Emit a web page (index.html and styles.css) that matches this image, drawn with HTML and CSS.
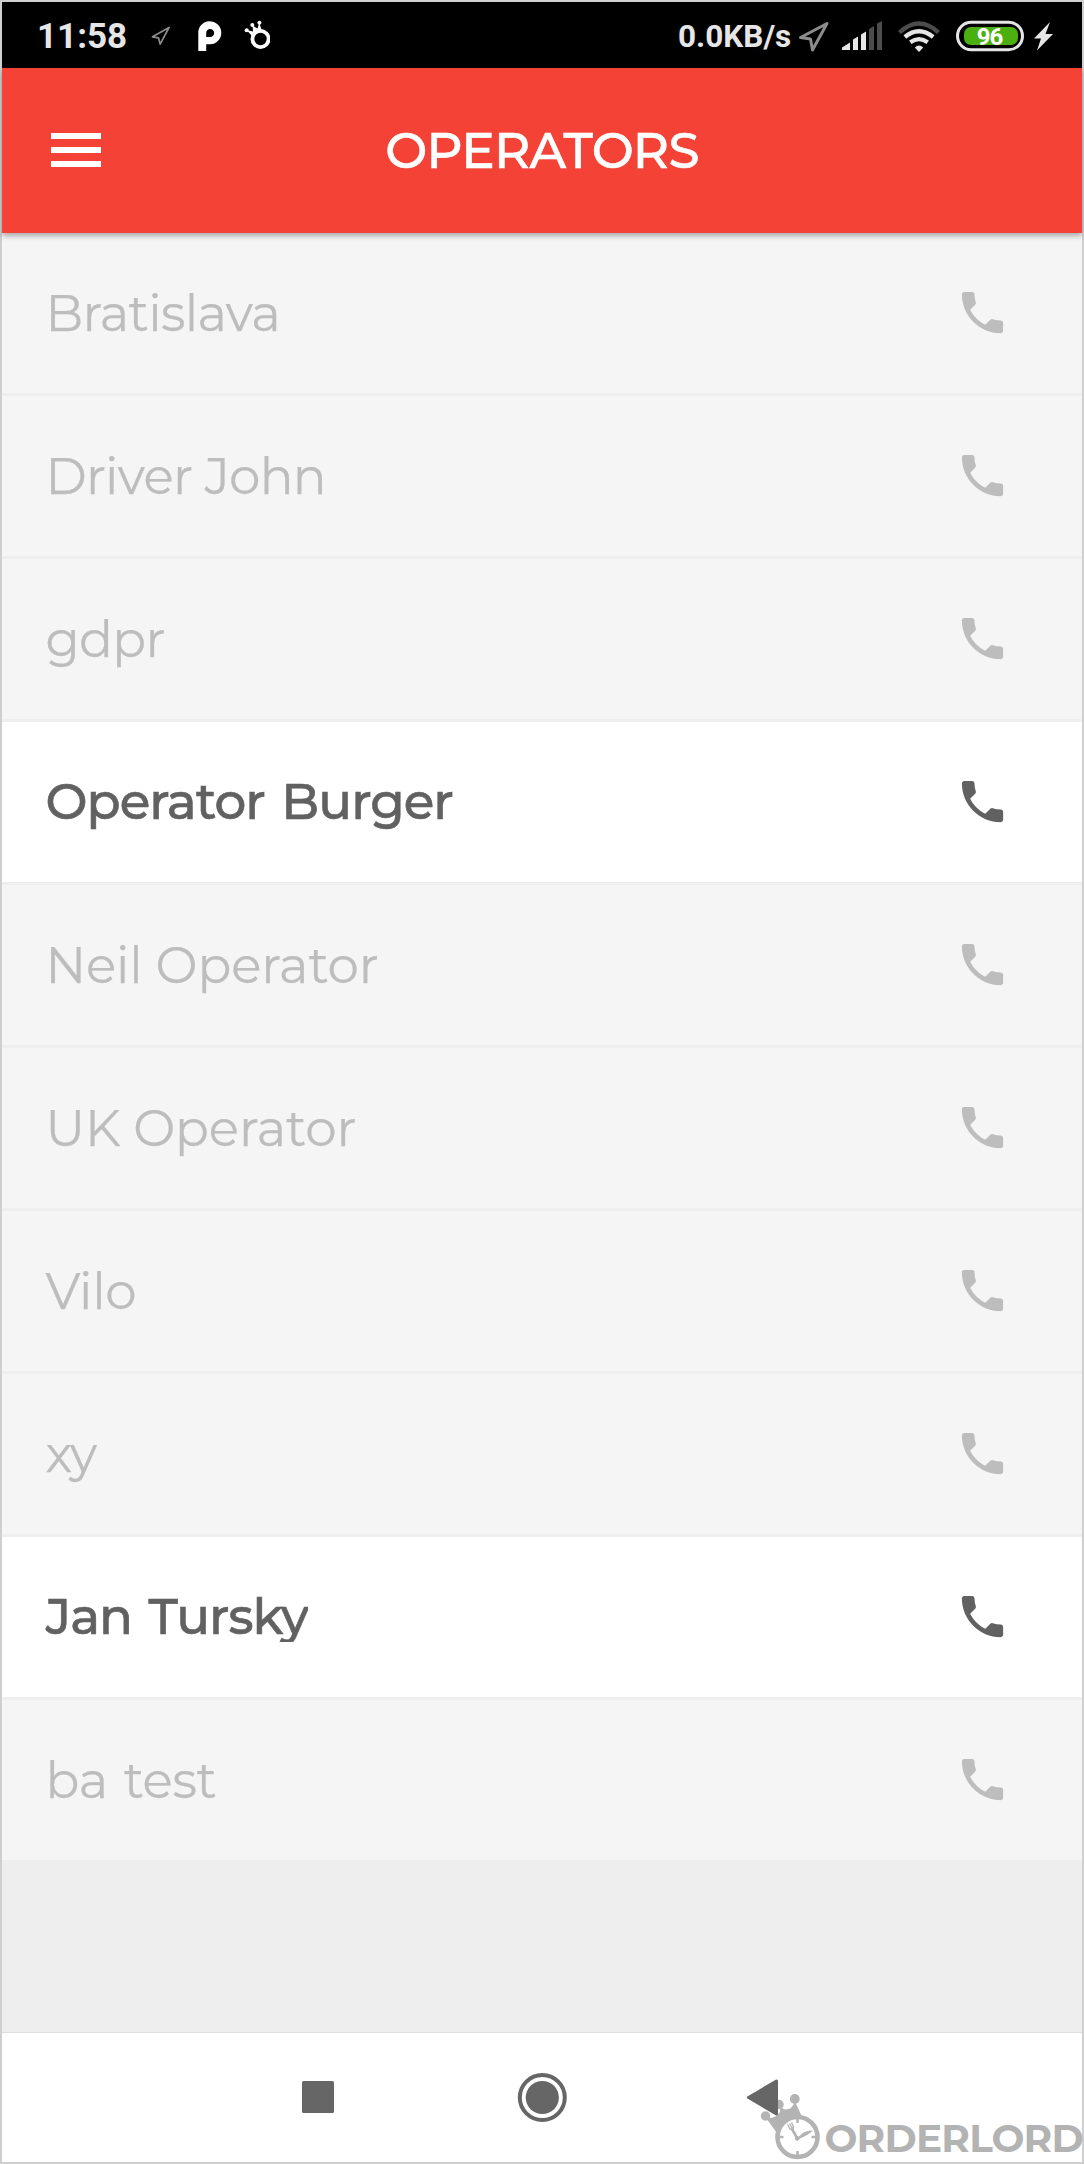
FILE: index.html
```
<!DOCTYPE html>
<html lang="en">
<head>
<meta charset="utf-8">
<title>Operators</title>
<link rel="stylesheet" href="styles.css">
</head>
<body>
<svg class="defs" aria-hidden="true">
  <symbol id="phone" viewBox="0 0 24 24"><path d="M6.62 10.79c1.44 2.83 3.76 5.14 6.59 6.59l2.2-2.2c.27-.27.67-.36 1.02-.24 1.12.37 2.33.57 3.57.57.55 0 1 .45 1 1V20c0 .55-.45 1-1 1-9.39 0-17-7.61-17-17 0-.55.45-1 1-1h3.5c.55 0 1 .45 1 1 0 1.25.2 2.45.57 3.57.11.35.03.74-.25 1.02l-2.2 2.2z"/></symbol>
</svg>
<div class="screen">
  <div class="status">
    <span class="clock">11:58</span>
    <svg class="status-left" viewBox="0 0 130 34" width="130" height="34">
      <path d="M12.500 18.800L29 9.500L20.200 26.200L18.500 19.800Z" fill="none" stroke="#8c8c8c" stroke-width="1.700" stroke-linejoin="round"/>
      <path fill="#fff" fill-rule="evenodd" d="M58.300 33V15.500A11.500 11.500 0 1 1 70 26.300H66.200V33ZM66.200 19V15.200A4 4 0 1 1 70 19Z"/>
      <circle cx="120.500" cy="21" r="8.100" fill="none" stroke="#fff" stroke-width="3.800"/>
      <g fill="#fff"><path d="M106.500 12L113 13.600L112.500 7.500L117.500 10.500L119.300 5L121.500 11.500L112 18Z"/><circle cx="106.700" cy="12.200" r="2"/><circle cx="112.300" cy="7" r="2"/><circle cx="119.400" cy="4.700" r="2"/></g>
    </svg>
    <span class="speed">0.0KB/s</span>
    <svg class="status-right" viewBox="797 16 260 38" width="260" height="38">
      <path d="M800.500 36.500L827 22.500L812.500 49L810.500 38Z" fill="none" stroke="#8c8c8c" stroke-width="3" stroke-linejoin="round"/>
      <path fill="#e6e6e6" d="M842 49V46.500L850 41.500V49ZM853 49V38.500L858 35.500V49ZM861 49V33.500L866 30.500V49Z"/>
      <path fill="#4c4c4c" d="M869 49V28L874 25V49ZM877 49V22.500L882 20V49Z"/>
      <g fill="none" stroke-width="4.200">
        <path stroke="#4c4c4c" d="M899.500 31.500Q919 13.500 938.500 31.500"/>
        <path stroke="#e6e6e6" d="M904.800 36Q919 24.500 933.200 36M910.300 41.300Q919 35 927.700 41.300"/>
      </g>
      <path fill="#e6e6e6" d="M914.800 46.500Q919 42.500 923.200 46.500L919 51Z"/>
      <rect x="957.500" y="21.300" width="65" height="27.400" rx="13.700" fill="none" stroke="#e6e6e6" stroke-width="3"/>
      <rect x="964" y="26" width="54" height="18" rx="7" fill="#4caf10"/>
      <text x="989.500" y="43.500" text-anchor="middle" class="battery">96</text>
      <path fill="#e6e6e6" d="M1050 21L1034 37.500H1041L1037 49.500L1053 33H1045.500Z"/>
    </svg>
  </div>
  <header class="appbar">
    <svg class="menu" viewBox="0 0 50 34" width="50" height="34"><path fill="#fff" d="M0 0h50v6H0zM0 14h50v6H0zM0 28h50v6H0z"/></svg>
    <h1>OPERATORS</h1>
  </header>
  <main class="list">
    <div class="row"><span>Bratislava</span><svg class="call"><use href="#phone"/></svg></div>
    <div class="row"><span>Driver John</span><svg class="call"><use href="#phone"/></svg></div>
    <div class="row"><span>gdpr</span><svg class="call"><use href="#phone"/></svg></div>
    <div class="row active"><span>Operator Burger</span><svg class="call"><use href="#phone"/></svg></div>
    <div class="row"><span class="wide">Neil Operator</span><svg class="call"><use href="#phone"/></svg></div>
    <div class="row"><span class="wide">UK Operator</span><svg class="call"><use href="#phone"/></svg></div>
    <div class="row"><span class="medium">Vilo</span><svg class="call"><use href="#phone"/></svg></div>
    <div class="row"><span class="narrow">xy</span><svg class="call"><use href="#phone"/></svg></div>
    <div class="row active"><span class="clipped">Jan Tursky</span><svg class="call"><use href="#phone"/></svg></div>
    <div class="row"><span class="medium">ba test</span><svg class="call"><use href="#phone"/></svg></div>
  </main>
  <nav class="navbar">
    <svg viewBox="0 0 1080 129" width="1080" height="129">
      <g fill="#b3b3b3">
        <circle cx="763.500" cy="83" r="4.700"/><circle cx="777" cy="71.500" r="4.700"/><circle cx="792.800" cy="66" r="4.900"/>
        <path d="M764 85Q774 86 778 79Q779 75 777 72Q782 79 789 75Q792 72 792.800 68L801 86L775 100Z"/>
      </g>
      <circle cx="795.500" cy="104" r="20" fill="#fff" stroke="#b3b3b3" stroke-width="4.600"/>
      <g stroke="#b3b3b3" fill="none"><path stroke-width="2.500" d="M795.500 86V90M795.500 118V122M777.500 104H781.500M809.500 104H813.500"/>
      <path stroke-width="2.600" d="M795 105L789.500 95"/><path stroke-width="1.300" d="M785.500 91.500L788 96Q790.500 97.500 791.500 94L789.500 89.500M787.500 90.500L790 95"/></g>
      <path fill="#b3b3b3" d="M793 103L797 103.500Q802 97 811 97.500Q807 101.500 798 105.500Q795 110 793 106Z"/>
      <path fill="#666" stroke="#666" stroke-width="3" stroke-linejoin="round" d="M746.500 64.500L774.500 48V81Z"/>
      <rect x="300" y="48" width="32" height="32" rx="1.500" fill="#666"/>
      <circle cx="540.300" cy="64.500" r="22.500" fill="none" stroke="#666" stroke-width="4"/><circle cx="540.300" cy="64.500" r="16.600" fill="#666"/>
    </svg>
    <span class="brand">ORDERLORD</span>
  </nav>
</div>
</body>
</html>
```
FILE: styles.css
```
* { box-sizing: border-box; }

body {
  margin: 0;
  font-family: Montserrat, Inter, sans-serif;
}

.defs { display: none; }

.screen {
  width: 1084px;
  height: 2164px;
  display: flex;
  flex-direction: column;
  border: 2px solid #cfcfcf;
  background: #eee;
}

.status {
  flex: none;
  height: 66px;
  display: flex;
  align-items: center;
  background: #000;
  color: #e6e6e6;
  font-family: Roboto, sans-serif;
  font-weight: 700;
}

.clock { width: 102px; padding: 2px 0 0 35px; font-size: 35px; }
.status-left { margin-left: 36px; }
.speed { margin-left: 407px; width: 120px; padding: 2px 0 0 1px; font-size: 31.500px; }
.status-right { flex: none; margin-top: 1px; }
.battery { font-size: 24px; letter-spacing: -1px; fill: #fff; }

.appbar {
  flex: none;
  position: relative;
  z-index: 1;
  height: 165px;
  display: grid;
  grid-template-columns: 150px 1fr 150px;
  align-items: center;
  background: #f44336;
  box-shadow: 0 3px 5px rgba(0, 0, 0, .3);
}

.menu { margin: 0 0 1px 49px; }

h1 {
  margin: 0;
  text-align: center;
  color: #fff;
  font-size: 50px;
  font-weight: 500;
  letter-spacing: -.8px;
  -webkit-text-stroke: .6px currentColor;
}

.row {
  height: 163px;
  display: flex;
  align-items: center;
  justify-content: space-between;
  padding: 0 72px 0 43.500px;
  border-bottom: 3px solid #eee;
  background: #f5f5f5;
  color: #bdbdbd;
  font-size: 50px;
  letter-spacing: -.7px;
  line-height: 60px;
  -webkit-text-stroke: .25px currentColor;
}

.row span { padding-top: 1px; }

.row.active {
  background: #fff;
  color: #616161;
  font-weight: 500;
  letter-spacing: -.95px;
  word-spacing: 4px;
  -webkit-text-stroke: .6px currentColor;
}

.row.active span { padding-top: 0; }

.wide { letter-spacing: -.15px; }
.medium { letter-spacing: -.4px; word-spacing: 3px; }
.narrow { letter-spacing: -1px; }

.clipped {
  letter-spacing: -1px;
  clip-path: inset(0 0 5px 0);
}

.call { width: 55px; height: 55px; margin-bottom: 1px; fill: currentColor; stroke: none; }

.navbar {
  flex: none;
  position: relative;
  height: 130px;
  margin-top: auto;
  border-top: 1px solid #dedede;
  background: #fff;
}

.brand {
  position: absolute;
  left: 822.500px;
  top: 81px;
  color: #b3b3b3;
  font-size: 39px;
  font-weight: 700;
  letter-spacing: -.8px;
  line-height: 48px;
}
```
